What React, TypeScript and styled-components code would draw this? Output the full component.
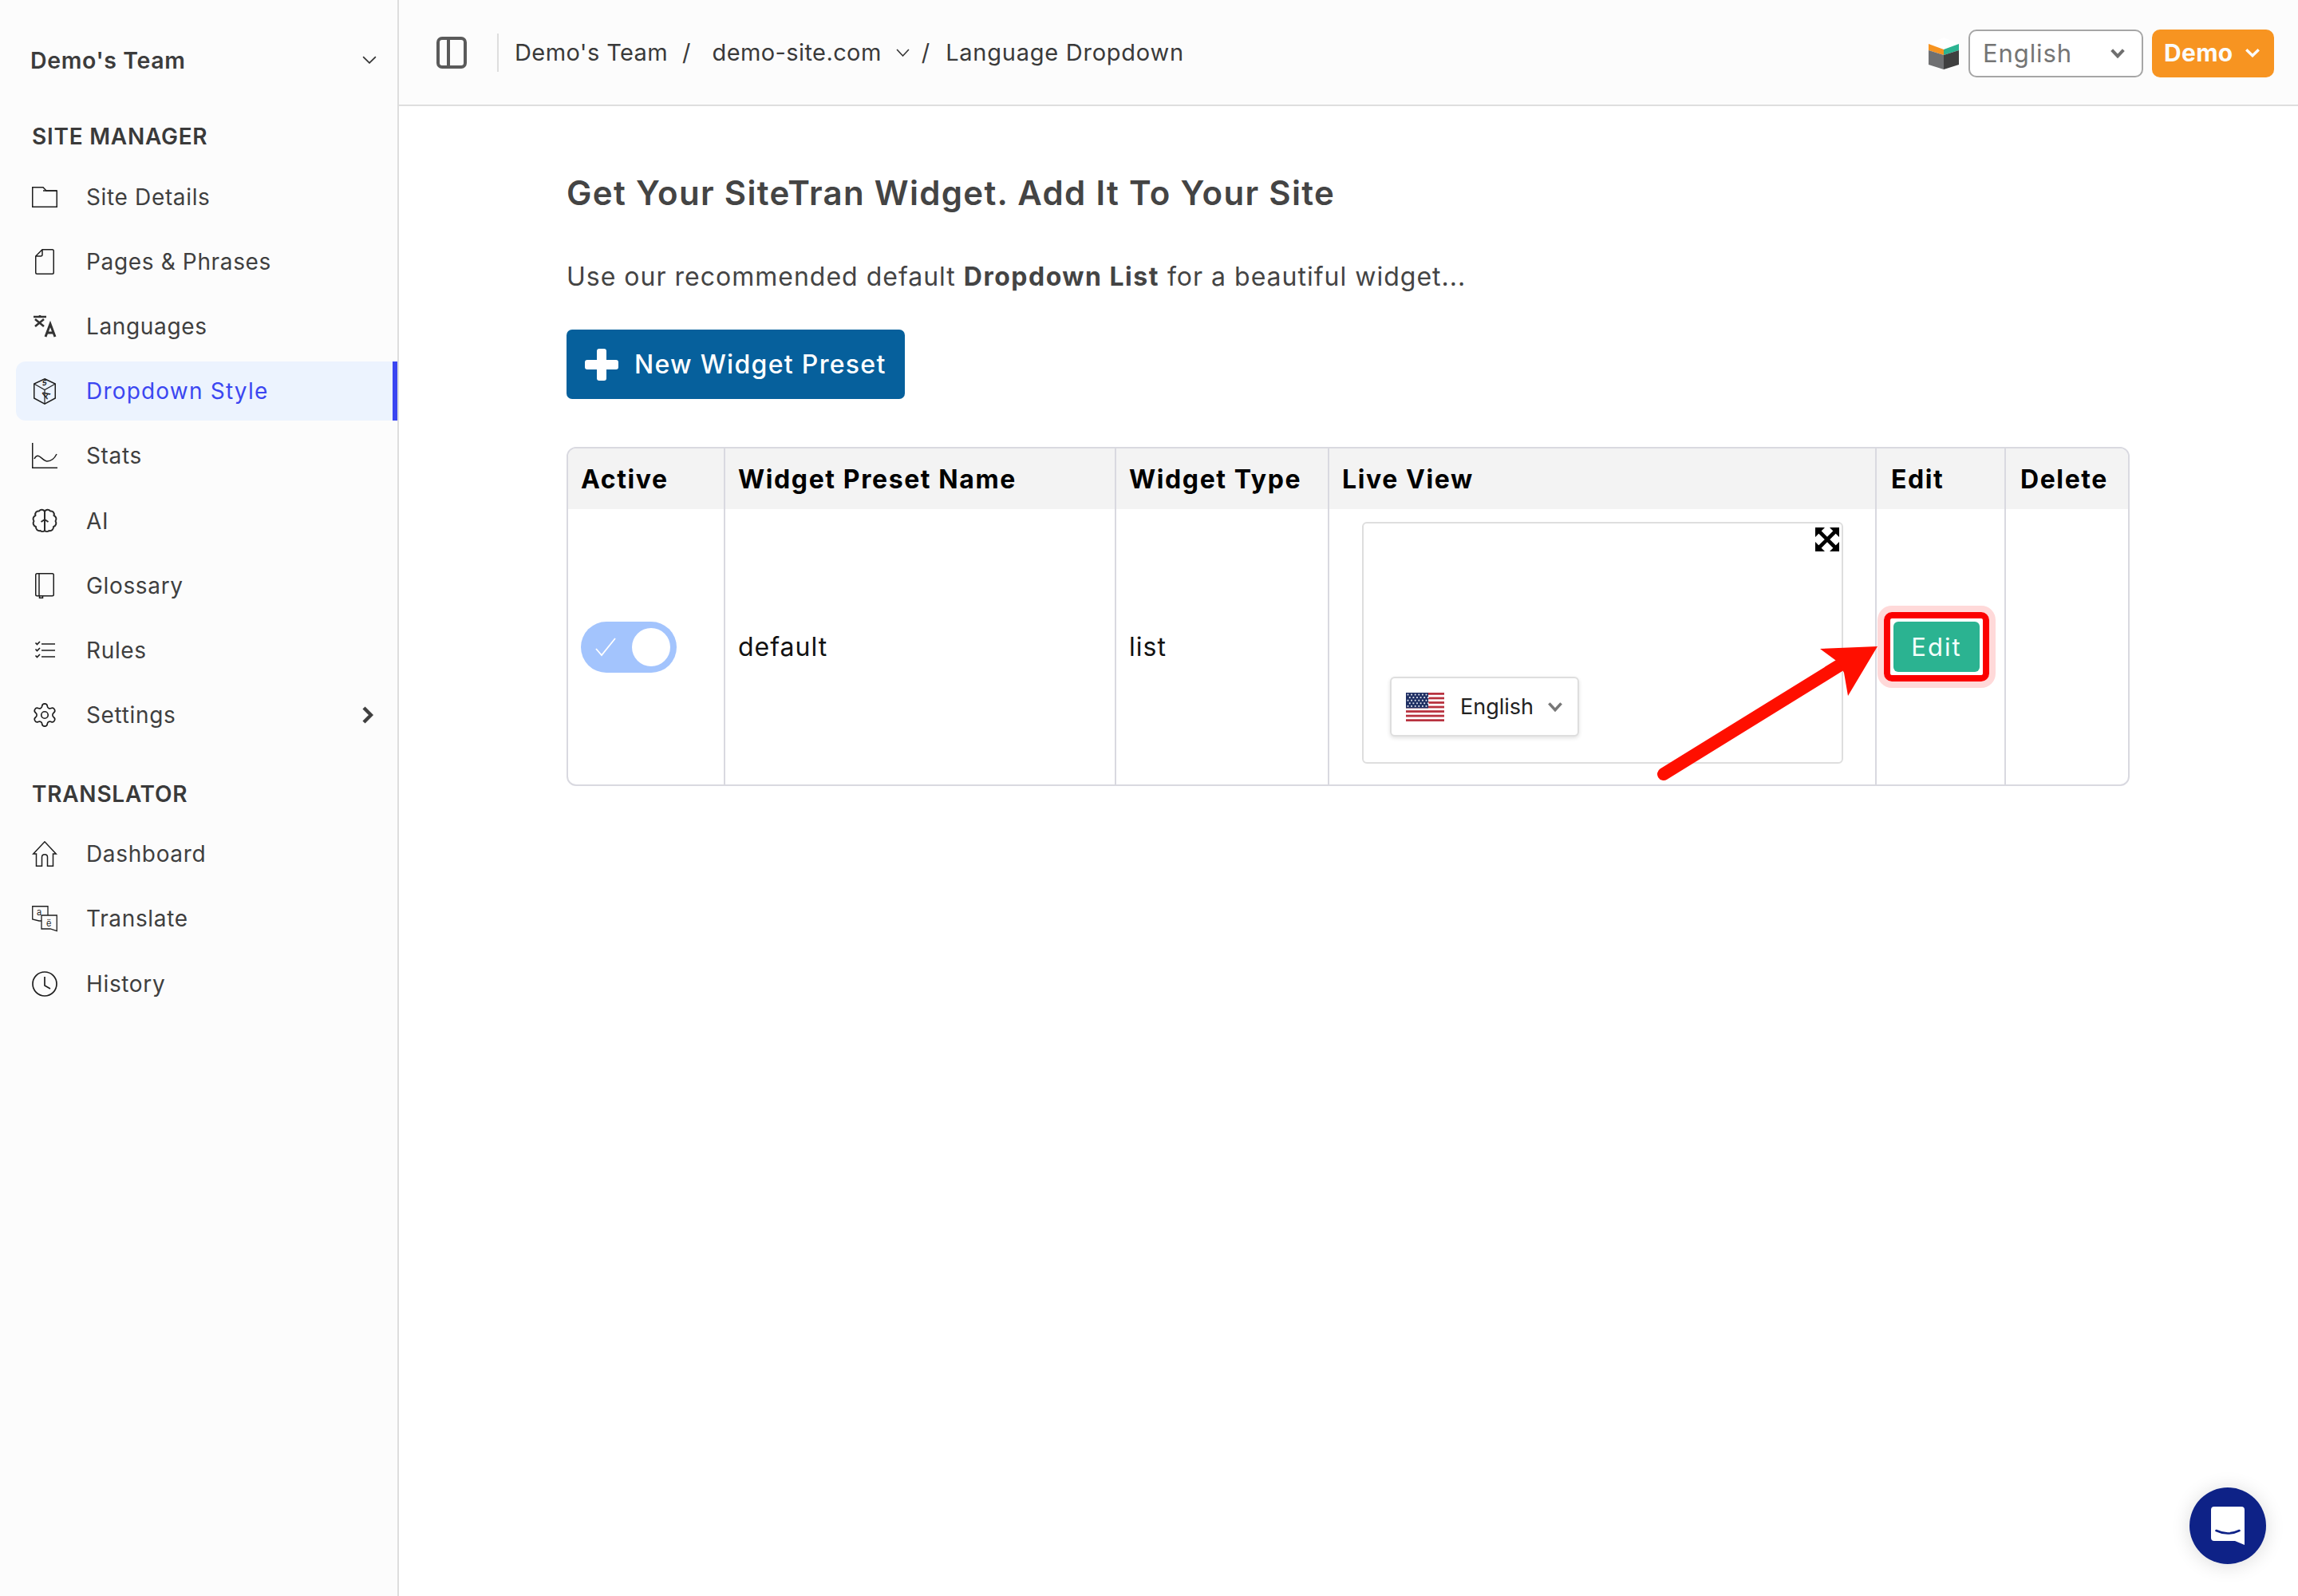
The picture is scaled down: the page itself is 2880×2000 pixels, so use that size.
import React from "react";
import styled, { createGlobalStyle } from "styled-components";
import { Settings } from "lucide-react";

const FONT = `Inter, "Open Sans", "Liberation Sans", sans-serif`;

const Global = createGlobalStyle`
  html, body { margin: 0; padding: 0; background: #fff; }
  body { font-family: ${FONT}; }
  * { box-sizing: border-box; }
`;

const Page = styled.div`
  position: relative;
  width: 2880px;
  height: 2000px;
  display: grid;
  grid-template-columns: 500px 1fr;
  overflow: hidden;
  background: #fff;
`;

const Sidebar = styled.aside`
  background: #fcfcfc;
  border-right: 2px solid #dedede;
  display: flex;
  flex-direction: column;
`;

const TeamRow = styled.div`
  height: 150px;
  padding: 0 26px 0 38px;
  display: flex;
  align-items: center;
  justify-content: space-between;
  color: #3c3c3c;
`;

const TeamName = styled.span`
  font-size: 28.5px;
  font-weight: 600;
  letter-spacing: 0.63px;
`;

const SectionTitle = styled.div<{ $gap: number }>`
  height: 42px;
  line-height: 42px;
  margin-top: ${(p) => p.$gap}px;
  padding-left: 40px;
  font-size: 28px;
  font-weight: 600;
  letter-spacing: 0.75px;
  color: #3a3a3a;
`;

const NavList = styled.nav`
  display: flex;
  flex-direction: column;
  margin-top: 14px;
`;

const NavItem = styled.div<{ $active?: boolean }>`
  height: 74px;
  margin: 3.6px 0 3.6px 20px;
  padding: 0 24px 0 20px;
  display: flex;
  align-items: center;
  border-radius: 12px 0 0 12px;
  color: ${(p) => (p.$active ? "#3b46f1" : "#3f3f3f")};
  background: ${(p) => (p.$active ? "#ecf3fe" : "transparent")};
  border-right: ${(p) => (p.$active ? "6px solid #3b46f1" : "6px solid transparent")};
`;

const NavIcon = styled.span`
  width: 32px;
  height: 36px;
  flex: none;
  display: flex;
  align-items: center;
  justify-content: center;
  color: #1e1e1e;
  svg { display: block; overflow: visible; }
`;

const NavLabel = styled.span<{ $active?: boolean }>`
  margin-left: 36px;
  font-size: 28px;
  font-weight: 400;
  letter-spacing: ${(p) => (p.$active ? "1.2px" : "0.65px")};
  flex: 1;
`;

const Main = styled.main`
  display: flex;
  flex-direction: column;
  min-width: 0;
`;

const Header = styled.header`
  height: 133px;
  flex: none;
  background: #fcfcfc;
  border-bottom: 2px solid #dedede;
  padding: 0 30px 0 47px;
  display: flex;
  align-items: center;
`;

const PanelToggle = styled.span`
  display: flex;
  width: 38px;
  height: 40px;
  margin-right: 38px;
`;

const Divider = styled.span`
  width: 2px;
  height: 48px;
  background: #dedede;
  margin-right: 20px;
`;

const Crumb = styled.span<{ $ls?: number }>`
  font-size: 29px;
  font-weight: 400;
  letter-spacing: ${(p) => p.$ls ?? 0.4}px;
  color: #3a3a3a;
  white-space: nowrap;
`;

const Slash = styled.span<{ $l: number; $r: number }>`
  margin: 0 ${(p) => p.$r}px 0 ${(p) => p.$l}px;
  font-size: 29px;
  color: #3a3a3a;
`;

const CrumbSpacer = styled.span`
  width: 18px;
`;

const HeaderRight = styled.div`
  margin-left: auto;
  padding-top: 2px;
  display: flex;
  align-items: center;
`;

const LangSelect = styled.div`
  width: 219px;
  height: 60px;
  margin-left: 12px;
  padding: 0 20px 0 16px;
  background: #fff;
  border: 2px solid #a6a6a6;
  border-radius: 10px;
  display: flex;
  align-items: center;
  justify-content: space-between;
  font-size: 31px;
  letter-spacing: 0.9px;
  color: #757575;
`;

const DemoButton = styled.div`
  width: 153px;
  height: 60px;
  margin-left: 11px;
  padding: 0 17px 2px 15px;
  background: #f79421;
  border-radius: 10px;
  display: flex;
  align-items: center;
  justify-content: space-between;
  font-size: 30px;
  font-weight: 700;
  letter-spacing: 0.3px;
  color: #fbfbfb;
`;

const Content = styled.section`
  flex: 1;
  padding: 85px 0 0 210px;
`;

const Title = styled.h1`
  margin: 0;
  height: 48px;
  line-height: 48px;
  font-size: 42px;
  font-weight: 600;
  letter-spacing: 1.3px;
  color: #444;
`;

const Lead = styled.p`
  margin: 61px 0 0;
  height: 40px;
  line-height: 40px;
  font-size: 32px;
  letter-spacing: 1px;
  color: #444;
  b { font-weight: 700; letter-spacing: 1.5px; }
`;

const NewButton = styled.div`
  margin-top: 46px;
  width: 424px;
  height: 87px;
  padding-left: 23px;
  display: flex;
  align-items: center;
  gap: 20px;
  background: #06609c;
  border-radius: 7px;
  color: #fff;
  font-size: 32px;
  font-weight: 500;
  letter-spacing: 1.3px;
`;

const Table = styled.div`
  margin-top: 60px;
  width: 1959px;
  height: 425px;
  border: 2px solid #d9d9e0;
  border-radius: 12px;
  display: grid;
  grid-template-columns: 197px 490px 267px 686px 162px 1fr;
  grid-template-rows: 76px 1fr;
  overflow: hidden;
  background: #fff;
`;

const HeadCell = styled.div<{ $last?: boolean; $pad?: number }>`
  background: #f3f3f3;
  border-right: ${(p) => (p.$last ? "none" : "2px solid #d9d9e0")};
  padding: 0 0 0 ${(p) => p.$pad ?? 16}px;
  display: flex;
  align-items: center;
  font-size: 32px;
  font-weight: 700;
  letter-spacing: 1.6px;
  color: #000;
`;

const BodyCell = styled.div<{ $last?: boolean; $stretch?: boolean }>`
  border-right: ${(p) => (p.$last ? "none" : "2px solid #d9d9e0")};
  padding: 0 0 0 16px;
  display: flex;
  align-items: ${(p) => (p.$stretch ? "flex-start" : "center")};
  font-size: 32px;
  letter-spacing: 1px;
  color: #111;
`;

const Toggle = styled.div`
  width: 120px;
  height: 64px;
  padding: 8px;
  border-radius: 32px;
  background: #a3c4fd;
  display: flex;
  align-items: center;
  justify-content: space-between;
`;

const ToggleKnob = styled.span`
  width: 48px;
  height: 48px;
  border-radius: 50%;
  background: #fff;
`;

const CheckWrap = styled.span`
  display: flex;
  margin-left: 10px;
`;

const LiveCell = styled(BodyCell)`
  padding: 16px 0 0 41px;
`;

const PreviewBox = styled.div`
  position: relative;
  width: 603px;
  height: 303px;
  border: 2px solid #dedede;
  border-radius: 6px;
  padding: 0 0 32px 33px;
  display: flex;
  align-items: flex-end;
`;

const ExpandIcon = styled.span`
  position: absolute;
  top: 5px;
  right: 3px;
  width: 30px;
  height: 30px;
  display: flex;
`;

const WidgetSelect = styled.div`
  width: 237px;
  height: 75px;
  padding: 0 18px 0 18px;
  background: #fff;
  border: 2px solid #dedede;
  border-radius: 6px;
  box-shadow: 0 2px 5px rgba(0, 0, 0, 0.12);
  display: flex;
  align-items: center;
  font-size: 27px;
  letter-spacing: 0;
  color: #222;
`;

const FlagSvg = styled.svg`
  flex: none;
`;

const WidgetLabel = styled.span`
  margin-left: 20px;
  flex: 1;
`;

const EditCell = styled(BodyCell)`
  padding: 0 0 0 21px;
`;

const EditButton = styled.div`
  position: relative;
  width: 108px;
  height: 63px;
  border-radius: 6px;
  background: #2bb391;
  color: #f4fffb;
  display: flex;
  align-items: center;
  justify-content: center;
  font-size: 31px;
  letter-spacing: 2px;
  &::before {
    content: "";
    position: absolute;
    inset: -12px;
    border: 8px solid #fb0000;
    border-radius: 10px;
    box-shadow: 0 0 0 8px #ffd9d9;
  }
`;

const ArrowOverlay = styled.svg`
  position: absolute;
  left: 2070px;
  top: 800px;
  width: 290px;
  height: 185px;
  overflow: visible;
`;

const ChatBubble = styled.div`
  position: absolute;
  right: 40px;
  bottom: 40px;
  width: 96px;
  height: 96px;
  border-radius: 50%;
  background: #0e2287;
  box-shadow: 0 2px 24px rgba(0, 0, 0, 0.14);
  display: flex;
  align-items: center;
  justify-content: center;
`;

const stroke = { fill: "none", stroke: "currentColor", strokeWidth: 1.5 } as const;

const ChevronDown = ({ w, h, sw, color }: { w: number; h: number; sw: number; color: string }) => (
  <svg width={w} height={h} viewBox={`0 0 ${w} ${h}`} fill="none">
    <path
      d={`M${sw / 1.5} ${sw / 1.5} L${w / 2} ${h - sw / 1.5} L${w - sw / 1.5} ${sw / 1.5}`}
      stroke={color}
      strokeWidth={sw}
    />
  </svg>
);

const FolderIcon = () => (
  <svg width="32" height="26" viewBox="0 0 32 26" {...stroke}>
    <path d="M.75 .75H14L18 5H31.25V25.25H.75Z" />
    <path d="M14 5H31" />
  </svg>
);
const PageIcon = () => (
  <svg width="24" height="32" viewBox="0 0 24 32" {...stroke}>
    <path d="M9 .75H21.5Q23.25 .75 23.25 2.5V29.5Q23.25 31.25 21.5 31.25H2.5Q.75 31.25 .75 29.5V9ZM.75 9H7Q9 9 9 7V.75" />
  </svg>
);
const TranslateIcon = () => (
  <svg width="28" height="28" viewBox="0 0 28 28" fill="none" stroke="#333" strokeWidth="2.6">
    <path d="M0 2H16M8 0V2M2 5L13 14M13 5L2 14" />
    <path d="M15 27L21 11L27 27M17 22H25" strokeWidth="3" />
  </svg>
);
const CubeIcon = () => (
  <svg width="28" height="33" viewBox="0 0 28 33" {...stroke}>
    <path d="M14 .75L27.25 7V25L14 32.25L.75 25V7Z" />
    <path d="M.75 7L14 14.5L27.25 7M14 14.5V32.25" strokeWidth="1.2" />
    <text x="0" y="0" fontSize="9" fontWeight="700" fill="currentColor" stroke="none" fontFamily="Inter, sans-serif" transform="translate(11 10) rotate(-20) skewX(-20)">S</text>
    <text x="0" y="0" fontSize="13" fontWeight="500" fill="currentColor" stroke="none" fontFamily="Inter, sans-serif" transform="translate(17 27) rotate(-60)">A</text>
  </svg>
);
const StatsIcon = () => (
  <svg width="32" height="32" viewBox="0 0 32 32" {...stroke}>
    <path d="M.75 0V31.25H32" />
    <path d="M3 20C8 10 13 23 19 23C25 23 28 20 31 14" />
  </svg>
);
const BrainIcon = () => (
  <svg width="30" height="32" viewBox="0 0 30 32" fill="none" stroke="#2a2a2a" strokeWidth="2" strokeLinejoin="round">
    <path d="M15 4A4 4 0 0 0 8 3.5A4 4 0 0 0 3.5 9A4.5 4.5 0 0 0 1.5 16A4.5 4.5 0 0 0 4 23A4.5 4.5 0 0 0 9.5 28A4 4 0 0 0 15 28A4 4 0 0 0 20.5 28A4.5 4.5 0 0 0 26 23A4.5 4.5 0 0 0 28.5 16A4.5 4.5 0 0 0 26.5 9A4 4 0 0 0 22 3.5A4 4 0 0 0 15 4Z" />
    <path d="M15 4V28M10.5 17L15 14L19.5 17" />
  </svg>
);
const BookIcon = () => (
  <svg width="24" height="32" viewBox="0 0 24 32" {...stroke}>
    <path d="M2.5 .75H21.5Q23.25 .75 23.25 2.5V27Q23.25 28.75 21.5 28.75H2.5Q.75 28.75 .75 27V2.5Q.75 .75 2.5 .75Z" />
    <path d="M5 .75V28.75M5.5 28.75V31.25H9.5V28.75" />
  </svg>
);
const RulesIcon = () => (
  <svg width="25" height="22" viewBox="0 0 25 22" {...stroke} strokeWidth="1.7">
    <path d="M8 3H25M8 11H25M8 19H25" />
    <path d="M.5 1.5L2.5 3.5L6 0M.5 9.5L2.5 11.5L6 8M.5 17.5L2.5 19.5L6 16" />
  </svg>
);
const HomeIcon = () => (
  <svg width="30" height="32" viewBox="0 0 30 32" {...stroke}>
    <path d="M.75 16L15 .75L29.25 16H25.5V31.25H18.5V20C18.5 15.5 11.5 15.5 11.5 20V31.25H4.5V16Z" />
  </svg>
);
const BubblesIcon = () => (
  <svg width="32" height="32" viewBox="0 0 32 32" {...stroke} strokeWidth="1.3">
    <path d="M.75 .75H20V19H9L.75 17Z" fill="#fcfcfc" />
    <path d="M12 12H31.25V31.5L23 29H12Z" fill="#fcfcfc" />
    <text x="6" y="12" fontSize="11" fill="currentColor" stroke="none" fontFamily="Inter, sans-serif">a</text>
    <text x="18" y="26" fontSize="11" fill="currentColor" stroke="none" fontFamily="Inter, sans-serif">ë</text>
  </svg>
);
const ClockIcon = () => (
  <svg width="32" height="32" viewBox="0 0 32 32" {...stroke} strokeWidth="1.7">
    <circle cx="16" cy="16" r="15" />
    <path d="M16 7V18L23 22" />
  </svg>
);
const GearIcon = () => <Settings size={34} strokeWidth={1.15} />;

const PanelIcon = () => (
  <svg width="38" height="40" viewBox="0 0 38 40" fill="none" stroke="#5a5a5a" strokeWidth="4">
    <rect x="2" y="2" width="34" height="36" rx="5" />
    <path d="M15 2V38" />
  </svg>
);

const CubeLogo = () => (
  <svg width="38" height="40" viewBox="0 0 38 40">
    <path d="M19 0L38 8L19 15L0 8Z" fill="#fff" />
    <path d="M0 8L19 15V22L0 16Z" fill="#f79421" />
    <path d="M38 8L19 15V22L38 16Z" fill="#2bb391" />
    <path d="M0 16L19 22V40L0 34Z" fill="#6f7072" />
    <path d="M38 16L19 22V40L38 34Z" fill="#3f3f3f" />
  </svg>
);

const PlusIcon = () => (
  <svg width="42" height="40" viewBox="0 0 42 40" fill="#fff">
    <rect x="15" y="0" width="12" height="40" rx="3" />
    <rect x="0" y="14" width="42" height="12" rx="3" />
  </svg>
);

const CheckMark = () => (
  <CheckWrap>
    <svg width="26" height="24" viewBox="0 0 26 24" fill="none" stroke="#fff" strokeWidth="1.8">
      <path d="M1 14L8 22L25 1" />
    </svg>
  </CheckWrap>
);

const ExpandSvg = () => (
  <svg width="30" height="30" viewBox="0 0 30 30">
    <path d="M0 0H12L0 12ZM30 0V12L18 0ZM0 30V18L12 30ZM30 30H18L30 18Z" fill="#000" />
    <path d="M3 3L27 27M27 3L3 27" stroke="#000" strokeWidth="4.6" />
  </svg>
);

const FlagIcon = () => {
  const stripes = Array.from({ length: 7 }, (_, i) => i);
  const dots: [number, number][] = [];
  for (let r = 0; r < 5; r++) for (let c = 0; c < 6; c++) dots.push([2.5 + c * 4.6 + (r % 2) * 2.3, 2.5 + r * 3.6]);
  return (
    <FlagSvg width="48" height="36" viewBox="0 0 48 36">
      <rect width="48" height="36" fill="#fff" />
      {stripes.map((i) => (
        <rect key={i} y={i * 5.54} width="48" height="2.77" fill="#b8323f" />
      ))}
      <rect width="28" height="19.4" fill="#1f2f63" />
      {dots.map(([x, y], i) => (
        <rect key={i} x={x - 0.9} y={y - 0.9} width="1.8" height="1.8" fill="#e6e9f2" />
      ))}
    </FlagSvg>
  );
};

const ChatIcon = () => (
  <svg width="42" height="48" viewBox="0 0 42 48">
    <path d="M4 0H38Q42 0 42 4V48L30 43H4Q0 43 0 39V4Q0 0 4 0Z" fill="#fff" />
    <path d="M6.5 30Q21 37 35.5 30" fill="none" stroke="#0e2287" strokeWidth="2.6" strokeLinecap="round" />
  </svg>
);

const siteItems = [
  { label: "Site Details", icon: <FolderIcon /> },
  { label: "Pages & Phrases", icon: <PageIcon /> },
  { label: "Languages", icon: <TranslateIcon /> },
  { label: "Dropdown Style", icon: <CubeIcon />, active: true },
  { label: "Stats", icon: <StatsIcon /> },
  { label: "AI", icon: <BrainIcon /> },
  { label: "Glossary", icon: <BookIcon /> },
  { label: "Rules", icon: <RulesIcon /> },
  { label: "Settings", icon: <GearIcon />, more: true },
];

const translatorItems = [
  { label: "Dashboard", icon: <HomeIcon /> },
  { label: "Translate", icon: <BubblesIcon /> },
  { label: "History", icon: <ClockIcon /> },
];

const RightChevron = () => (
  <svg width="14" height="22" viewBox="0 0 14 22" fill="none" stroke="#3f3f3f" strokeWidth="4.4">
    <path d="M2 2L11 11L2 20" />
  </svg>
);

export default function App() {
  return (
    <Page>
      <Global />
      <Sidebar>
        <TeamRow>
          <TeamName>Demo's Team</TeamName>
          <ChevronDown w={18} h={10} sw={1.7} color="#333" />
        </TeamRow>
        <SectionTitle $gap={0}>SITE MANAGER</SectionTitle>
        <NavList>
          {siteItems.map((it) => (
            <NavItem key={it.label} $active={it.active}>
              <NavIcon>{it.icon}</NavIcon>
              <NavLabel $active={it.active}>{it.label}</NavLabel>
              {it.more && <RightChevron />}
            </NavItem>
          ))}
        </NavList>
        <SectionTitle $gap={37}>TRANSLATOR</SectionTitle>
        <NavList>
          {translatorItems.map((it) => (
            <NavItem key={it.label}>
              <NavIcon>{it.icon}</NavIcon>
              <NavLabel>{it.label}</NavLabel>
            </NavItem>
          ))}
        </NavList>
      </Sidebar>
      <Main>
        <Header>
          <PanelToggle>
            <PanelIcon />
          </PanelToggle>
          <Divider />
          <Crumb>Demo's Team</Crumb>
          <Slash $l={18} $r={27}>/</Slash>
          <Crumb>demo-site.com</Crumb>
          <CrumbSpacer />
          <ChevronDown w={17} h={10} sw={1.6} color="#333" />
          <Slash $l={15} $r={20}>/</Slash>
          <Crumb $ls={0.75}>Language Dropdown</Crumb>
          <HeaderRight>
            <CubeLogo />
            <LangSelect>
              English
              <ChevronDown w={20} h={13} sw={4} color="#6f6f6f" />
            </LangSelect>
            <DemoButton>
              Demo
              <ChevronDown w={20} h={12} sw={3.4} color="#fbfbfb" />
            </DemoButton>
          </HeaderRight>
        </Header>
        <Content>
          <Title>Get Your SiteTran Widget. Add It To Your Site</Title>
          <Lead>
            Use our recommended default <b>Dropdown List</b> for a beautiful widget...
          </Lead>
          <NewButton>
            <PlusIcon />
            New Widget Preset
          </NewButton>
          <Table>
            <HeadCell>Active</HeadCell>
            <HeadCell>Widget Preset Name</HeadCell>
            <HeadCell>Widget Type</HeadCell>
            <HeadCell>Live View</HeadCell>
            <HeadCell $pad={18}>Edit</HeadCell>
            <HeadCell $last $pad={18}>Delete</HeadCell>
            <BodyCell>
              <Toggle>
                <CheckMark />
                <ToggleKnob />
              </Toggle>
            </BodyCell>
            <BodyCell>default</BodyCell>
            <BodyCell>list</BodyCell>
            <LiveCell $stretch>
              <PreviewBox>
                <ExpandIcon>
                  <ExpandSvg />
                </ExpandIcon>
                <WidgetSelect>
                  <FlagIcon />
                  <WidgetLabel>English</WidgetLabel>
                  <ChevronDown w={20} h={13} sw={3.6} color="#777" />
                </WidgetSelect>
              </PreviewBox>
            </LiveCell>
            <EditCell>
              <EditButton>Edit</EditButton>
            </EditCell>
            <BodyCell $last />
          </Table>
        </Content>
      </Main>
      <ArrowOverlay viewBox="0 0 290 185">
        <path d="M15 170L248 26" stroke="#ff0f00" strokeWidth="16" strokeLinecap="round" />
        <path d="M283 10L211 13L234 30L241 43L246 72Z" fill="#ff0f00" />
      </ArrowOverlay>
      <ChatBubble>
        <ChatIcon />
      </ChatBubble>
    </Page>
  );
}
